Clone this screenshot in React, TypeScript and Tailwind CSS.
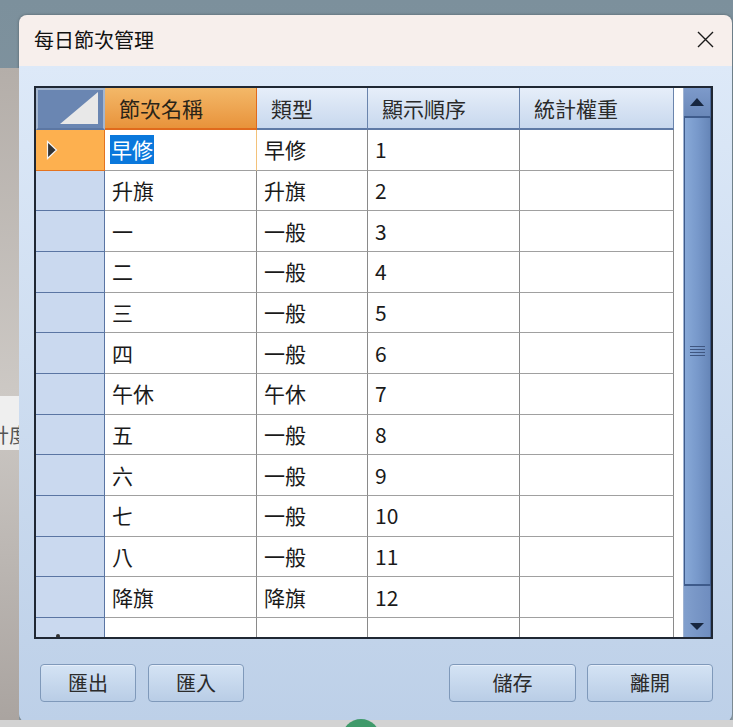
import React from "react";

const rows: [string, string, string][] = [
  ["早修", "早修", "1"],
  ["升旗", "升旗", "2"],
  ["一", "一般", "3"],
  ["二", "一般", "4"],
  ["三", "一般", "5"],
  ["四", "一般", "6"],
  ["午休", "午休", "7"],
  ["五", "一般", "8"],
  ["六", "一般", "9"],
  ["七", "一般", "10"],
  ["八", "一般", "11"],
  ["降旗", "降旗", "12"],
];

const cols = "grid grid-cols-[69px_152px_111px_152px_154px]";

const Btn = ({ label, w }: { label: string; w: string }) => (
  <button
    className={`${w} h-[38px] rounded-[4px] border border-[#7f99ba] bg-gradient-to-b from-[#d4e3f4] to-[#b9cde6] text-[20px] leading-none text-[#2b2b2b] shadow-[inset_0_1px_0_#e6eefa]`}
  >
    {label}
  </button>
);

const Scrollbar = () => (
  <div className="w-[28px] flex flex-col bg-[#6f8cbc] border-l border-[#9fb3d2]">
    <div className="h-[30px] flex items-center justify-center bg-gradient-to-b from-[#7d9aca] to-[#6a88b9] border-b-2 border-[#3f5c8c] border-r border-r-[#4d6b9c]">
      <svg width="14" height="8" viewBox="0 0 14 8">
        <polygon points="7,0 14,8 0,8" fill="#17263f" />
      </svg>
    </div>
    <div className="h-[468px] flex items-center justify-center bg-gradient-to-r from-[#88a9d8] via-[#7899cb] to-[#6686b8] border-x border-[#3e5b8b] border-b-2 border-b-[#3e5b8b]">
      <div className="flex flex-col gap-[2px]">
        <div className="w-[15px] h-[1px] bg-[#3f5680]" />
        <div className="w-[15px] h-[1px] bg-[#3f5680]" />
        <div className="w-[15px] h-[1px] bg-[#3f5680]" />
        <div className="w-[15px] h-[1px] bg-[#3f5680]" />
      </div>
    </div>
    <div className="flex-1 flex items-end justify-center pb-[7px] bg-gradient-to-r from-[#819fcd] to-[#6f8dbf] border-r border-[#4d6b9c]">
      <svg width="14" height="7" viewBox="0 0 14 7">
        <polygon points="0,0 14,0 7,7" fill="#17263f" />
      </svg>
    </div>
  </div>
);

export default function App() {
  return (
    <div className="relative w-[733px] h-[727px] overflow-hidden bg-gradient-to-b from-[#7c909c] to-[#8e9ea8] font-['Noto_Sans_CJK_TC','Noto_Sans_CJK_JP',sans-serif]">
      {/* desktop behind the dialog */}
      <div className="absolute left-0 top-[68px] w-[19px] h-[660px] bg-gradient-to-b from-[#b4aea9] via-[#cdc9c5] to-[#a9a39f]" />
      <div className="absolute left-0 top-[396px] w-[19px] h-[54px] bg-[#efefef] overflow-hidden">
        <span className="absolute left-[-11px] top-[29px] whitespace-nowrap text-[20px] leading-none text-[#555]">計度</span>
      </div>
      <div className="absolute left-0 top-[720px] w-[733px] h-[7px] bg-[#d3d3d3]" />
      <div className="absolute left-[342px] top-[719px] w-[38px] h-[38px] rounded-full bg-[#3f9a6a]" />

      <div className="pt-[15px] pl-[19px]">
        <div className="w-[713px] h-[707px] rounded-[8px] overflow-hidden flex flex-col shadow-[0_0_3px_rgba(0,0,0,0.35)]">
          {/* title bar */}
          <div className="h-[51px] shrink-0 bg-[#f7efec] flex items-center justify-between pl-[15px] pr-[18px] pb-[2px]">
            <span className="text-[20px] leading-none text-[#111]">每日節次管理</span>
            <svg width="17" height="17" viewBox="0 0 17 17">
              <path d="M1 1 L16 16 M16 1 L1 16" stroke="#1a1a1a" strokeWidth="1.4" />
            </svg>
          </div>

          {/* body */}
          <div className="flex-1 bg-gradient-to-b from-[#dde9f8] to-[#bdd0e8] pl-[15px] pr-[19px] pt-[20px]">
            <div className="w-[679px] h-[553px] border-2 border-[#1f2733] flex bg-white">
              <div className="w-[647px] h-[549px] overflow-hidden">
                {/* header */}
                <div className={`${cols} h-[42px]`}>
                  <div className="relative bg-[#6a86b2] border-[2px] border-[#a4b6cf] border-b-[#5c77a3]">
                    <svg className="absolute right-[5px] bottom-[4px]" width="38" height="32" viewBox="0 0 38 32">
                      <polygon points="38,0 38,32 0,32" fill="#e8e8e8" />
                    </svg>
                  </div>
                  <div className="flex items-center pl-[14px] bg-gradient-to-b from-[#f3b868] to-[#e8933a] border-r border-b-2 border-[#e06a1c] text-[21px] leading-none text-[#2a2418]">
                    節次名稱
                  </div>
                  {["類型", "顯示順序", "統計權重"].map((h) => (
                    <div
                      key={h}
                      className="flex items-center pl-[14px] bg-gradient-to-b from-[#e6eef9] to-[#c8d8ee] border-r border-b-2 border-r-[#6a84ac] border-b-[#5f7aa6] text-[21px] leading-none text-[#2a2a2a]"
                    >
                      {h}
                    </div>
                  ))}
                </div>

                {/* rows */}
                {rows.map((r, i) => {
                  const sel = i === 0;
                  return (
                    <div key={i} className={`${cols} h-[40.67px]`}>
                      <div
                        className={
                          sel
                            ? "flex items-center pl-[10px] bg-[#fdb04f] border-r border-b border-[#e4731f]"
                            : "bg-[#cad9ef] border-r border-b border-[#5a75a3]"
                        }
                      >
                        {sel && (
                          <svg width="12" height="20" viewBox="0 0 12 20">
                            <polygon points="1.5,1.5 10.5,10 1.5,18.5" fill="#333" stroke="#f3f3f3" strokeWidth="1.2" />
                          </svg>
                        )}
                      </div>
                      <div
                        className={`flex items-center pl-[5px] border-b border-b-[#a0a0a0] border-r ${
                          sel ? "border-r-[#f3c27a]" : "border-r-[#8a8a8a]"
                        } text-[21px] leading-none text-[#1a1a1a]`}
                      >
                        {sel ? (
                          <span className="bg-[#0a78dc] text-white px-[1px] py-[4px]">{r[0]}</span>
                        ) : (
                          <span className="pl-[2px]">{r[0]}</span>
                        )}
                      </div>
                      <div className="flex items-center pl-[7px] border-b border-r border-b-[#a0a0a0] border-r-[#8a8a8a] text-[21px] leading-none text-[#1a1a1a]">
                        {r[1]}
                      </div>
                      <div className="flex items-center pl-[7px] border-b border-r border-b-[#a0a0a0] border-r-[#8a8a8a] text-[21px] leading-none text-[#1a1a1a]">
                        {r[2]}
                      </div>
                      <div className="border-b border-r border-b-[#a0a0a0] border-r-[#8a8a8a]" />
                    </div>
                  );
                })}

                {/* new row */}
                <div className={`${cols} h-[40px]`}>
                  <div className="relative bg-[#cad9ef] border-r border-[#5a75a3]">
                    <div className="absolute left-[20px] top-[16px] w-[4px] h-[4px] rounded-full bg-[#333]" />
                  </div>
                  <div className="border-r border-[#8a8a8a]" />
                  <div className="border-r border-[#8a8a8a]" />
                  <div className="border-r border-[#8a8a8a]" />
                  <div className="border-r border-[#8a8a8a]" />
                </div>
              </div>
              <Scrollbar />
            </div>

            <div className="mt-[25px] flex justify-between pl-[6px]">
              <div className="flex gap-[12px]">
                <Btn label="匯出" w="w-[96px]" />
                <Btn label="匯入" w="w-[96px]" />
              </div>
              <div className="flex gap-[11px]">
                <Btn label="儲存" w="w-[127px]" />
                <Btn label="離開" w="w-[126px]" />
              </div>
            </div>
          </div>
        </div>
      </div>
    </div>
  );
}
